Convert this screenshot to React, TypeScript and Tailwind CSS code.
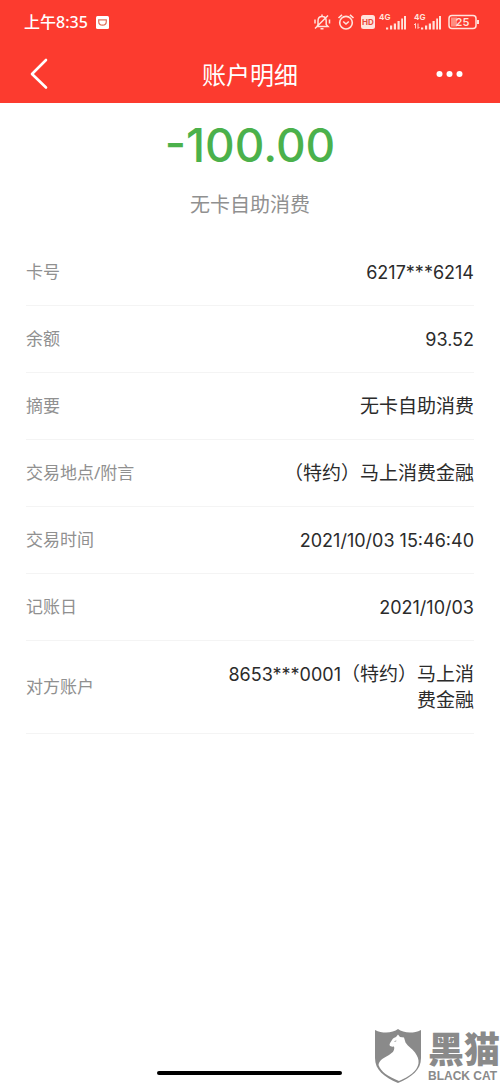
import type { ReactNode } from "react";

const sans = "font-['Noto_Sans','Noto_Sans_CJK_SC',sans-serif]";

function Signal({ data }: { data?: boolean }) {
  return (
    <svg width="29" height="22" viewBox="0 0 29 22" fill="#ffe3dc" aria-hidden="true">
      <text x="1" y="9" fontSize="8" fontWeight="700" fontFamily="Inter">4G</text>
      <path d="M8 16.500h2.200v2H8zM12 14.500h2.200v4H12zM15.800 12.500h2.200v6h-2.200zM19.500 10h2.200v8.500h-2.200zM23.200 7.500h1.800v11h-1.800zM26 5h2v13.500h-2z" />
      {data && <path d="M2.500 12.500v5M1 14l1.500-1.500M5 12.500v5L6.500 16" stroke="#ffe3dc" strokeWidth="0.9" fill="none" />}
    </svg>
  );
}

function StatusBar() {
  return (
    <div className="flex h-11 items-center justify-between pr-5 pl-6 text-white">
      <div className="flex items-center gap-2">
        <span className="text-base leading-6 font-medium">上午8:35</span>
        <svg width="13" height="13" viewBox="0 0 13 13" aria-hidden="true">
          <rect width="13" height="13" rx="1.500" fill="#fff" />
          <path d="M2.700 3.800h7.600v1.700c0 2.200-1.600 3.700-3.800 3.700S2.700 7.700 2.700 5.500z" fill="none" stroke="#e0705a" strokeWidth="1.200" />
        </svg>
      </div>
      <div className="flex items-center gap-[3px]">
        <div className="flex items-center gap-1.5">
          <svg width="18" height="18" viewBox="0 0 18 18" fill="none" stroke="#ffe3dc" strokeWidth="1.500" aria-hidden="true">
            <path d="M4 13.500h11l-1.800-2V8c0-2.500-1.500-4.500-4.200-4.500S5 5.500 5 8v3.500zM9 1.500v2M7.500 15.800h3M2 6.500v4M16.500 6.500v4M2 15.500L15 2.500" />
          </svg>
          <svg width="18" height="18" viewBox="0 0 18 18" fill="none" stroke="#ffe3dc" strokeWidth="1.600" aria-hidden="true">
            <circle cx="9" cy="9.700" r="6.300" />
            <path d="M1.500 5L5 1.800M16.500 5L13 1.800M6.200 8.500L9 11l2.800-2.500" />
          </svg>
          <svg width="14" height="14" viewBox="0 0 14 14" aria-hidden="true">
            <rect width="14" height="14" rx="2.500" fill="#ffe3dc" />
            <text x="7" y="10" fontSize="8" fontWeight="700" textAnchor="middle" fill="#e8483a" fontFamily="Inter">HD</text>
          </svg>
        </div>
        <div className="flex items-center gap-1.5">
          <Signal />
          <Signal data />
          <svg width="32" height="16" viewBox="0 0 32 16" aria-hidden="true">
            <rect x="1" y="1.500" width="27" height="13" rx="3" fill="none" stroke="#ffe3dc" strokeWidth="1.500" />
            <rect x="3" y="3.500" width="6" height="9" fill="#ff8d80" />
            <path d="M30 6v4" stroke="#ffe3dc" strokeWidth="2" />
            <text x="14.500" y="12" fontSize="11" fontWeight="600" textAnchor="middle" fill="#ffe3dc" fontFamily="Inter">25</text>
          </svg>
        </div>
      </div>
    </div>
  );
}

function Header() {
  return (
    <header className="bg-[#fc3b2f]">
      <StatusBar />
      <div className="flex h-[59px] items-center justify-between px-6 text-white">
        <button type="button" aria-label="返回" className="w-12">
          <svg width="30" height="34" viewBox="0 0 30 34" fill="none" stroke="#fff" strokeWidth="2.600" strokeLinecap="round" strokeLinejoin="round">
            <path d="M22 3L8 17L22 30.500" />
          </svg>
        </button>
        <h1 className="pt-0.5 text-2xl leading-8">账户明细</h1>
        <button type="button" aria-label="更多" className="flex w-12 justify-end pr-3">
          <svg width="28" height="8" viewBox="0 0 28 8" fill="#fff">
            <circle cx="3.500" cy="4" r="3" />
            <circle cx="13.500" cy="4" r="3" />
            <circle cx="23.500" cy="4" r="3" />
          </svg>
        </button>
      </div>
    </header>
  );
}

function Num({ children }: { children: ReactNode }) {
  return <span className="font-['Inter',sans-serif] text-[18px] leading-none">{children}</span>;
}

const rows: { label: string; value: ReactNode }[] = [
  { label: "卡号", value: <Num>6217***6214</Num> },
  { label: "余额", value: <Num>93.52</Num> },
  { label: "摘要", value: "无卡自助消费" },
  { label: "交易地点/附言", value: "（特约）马上消费金融" },
  { label: "交易时间", value: <Num>2021/10/03 15:46:40</Num> },
  { label: "记账日", value: <Num>2021/10/03</Num> },
  { label: "对方账户", value: <><Num>8653***0001</Num>（特约）马上消费金融</> },
];

function BlackCat() {
  return (
    <div className="flex items-center gap-1.5 text-[#8a8a8a]">
      <svg width="47" height="54" viewBox="0 0 47 54" aria-hidden="true">
        <path d="M23 0C18 4 8 5 0 1v28c0 12 9 19 23 25c14-6 23-13 23-25V1C38 5 28 4 23 0z" fill="#8a8a8a" />
        <path d="M23 5.500l2 2.500l4 .5l1.500 5c2.500 4 6.500 6 9.500 10c2.500 3.500 4 7 3.500 11c-1.500 8-9 13-19.500 17.500C13 47.500 6 43 3.500 36c.5-5 6-7.500 10.500-10c4-2.500 6-5 5-8.500c-1.500 .3-4 .2-4.500-1.500c0-2 1.500-3 2.500-5c1-2 2.500-2.500 4-3z" fill="#fff" />
        <path d="M19.500 12.500l1.800-.6" stroke="#8a8a8a" strokeWidth="0.800" />
      </svg>
      <div className="flex flex-col">
        <span className="text-[36px] leading-10 font-black">黑猫</span>
        <span className="font-['Liberation_Sans',sans-serif] text-xs leading-3 font-bold">BLACK CAT</span>
      </div>
    </div>
  );
}

export default function App() {
  return (
    <div className={`flex min-h-screen flex-col bg-white ${sans}`}>
      <Header />
      <main>
        <section className="flex flex-col items-center pt-3">
          <p className="font-['Inter',sans-serif] text-[46px] leading-[60px] font-medium text-[#4bb14b] [font-feature-settings:'case']">-100.00</p>
          <p className="pt-4 text-xl leading-7 text-[#909090]">无卡自助消费</p>
        </section>
        <dl className="px-[26px] pt-5">
          {rows.map((row) => (
            <div key={row.label} className="flex items-center justify-between border-b border-[#f4f4f4] py-5">
              <dt className="text-[17px] leading-[26px] text-[#909090]">{row.label}</dt>
              <dd className="max-w-[56%] text-right text-[19px] leading-[26px] text-[#2b2b2b]">{row.value}</dd>
            </div>
          ))}
        </dl>
      </main>
      <footer className="mt-auto flex items-end justify-end">
        <div className="mr-[33px] mb-2 h-1 w-[185px] rounded-full bg-black" />
        <BlackCat />
      </footer>
    </div>
  );
}
